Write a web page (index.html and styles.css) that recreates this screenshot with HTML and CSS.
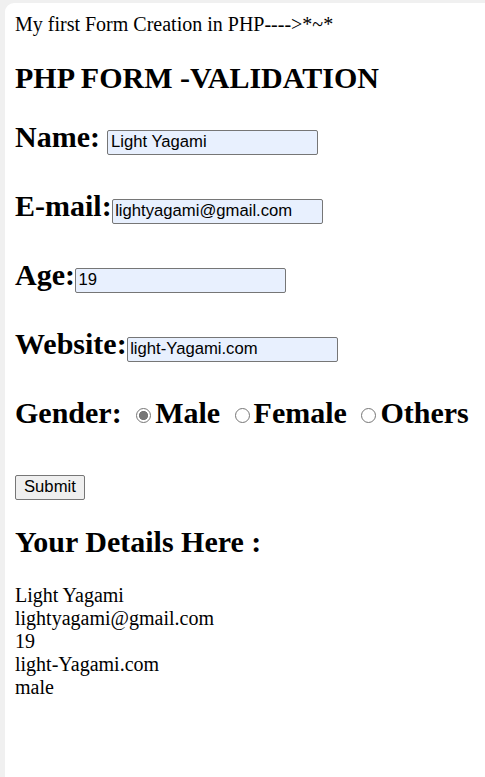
FILE: index.html
```html
<!DOCTYPE html>
<html lang="en">
<head>
<meta charset="utf-8">
<title>PHP Form</title>
<link rel="stylesheet" href="styles.css">
</head>
<body>
<div class="page">
My first Form Creation in PHP----&gt;*~*
<h2 class="heading">PHP FORM -VALIDATION</h2>
<form class="form" method="post">
Name: <input class="field" type="text" name="name" value="Light Yagami"><br><br>
E-mail:<input class="field" type="text" name="email" value="lightyagami@gmail.com"><br><br>
Age:<input class="field" type="text" name="age" value="19"><br><br>
Website:<input class="field" type="text" name="website" value="light-Yagami.com"><br><br>
Gender: <input class="radio" type="radio" name="gender" value="male" checked>Male <input class="radio" type="radio" name="gender" value="female">Female <input class="radio" type="radio" name="gender" value="others">Others<br><br>
<button class="submit" type="button">Submit</button>
</form>
<h2 class="heading">Your Details Here :</h2>
<div class="details">
Light Yagami<br>
lightyagami@gmail.com<br>
19<br>
light-Yagami.com<br>
male
</div>
</div>
</body>
</html>
```
FILE: styles.css
```css
html {
  margin: 0;
  padding: 0;
  height: 100%;
  background: #f0f0f0;
}

body {
  margin: 0;
  padding: 3px 0 0 5px;
  height: 100%;
  box-sizing: border-box;
  font-family: "Liberation Serif", "Times New Roman", serif;
  color: #000;
}

.page {
  background: #fff;
  border-top-left-radius: 9px;
  padding: 10px;
  height: 100%;
  box-sizing: border-box;
  font-size: 20px;
  line-height: 23px;
  overflow: hidden;
}

.heading {
  font-size: 30px;
  line-height: 34.5px;
  font-weight: bold;
  margin: 24.9px 0;
}

.form {
  font-size: 30px;
  line-height: 34.5px;
  font-weight: bold;
  margin: 24.9px 0;
}

.field {
  box-sizing: border-box;
  width: 211px;
  height: 25px;
  margin: 0;
  padding: 0 2.5px;
  border: 1px solid #767676;
  border-radius: 2px;
  background: #e8f0fe;
  font-family: "Liberation Sans", Arial, sans-serif;
  font-size: 16.67px;
  font-weight: normal;
  color: #000;
  vertical-align: baseline;
}

.radio {
  appearance: none;
  -webkit-appearance: none;
  box-sizing: border-box;
  width: 15px;
  height: 15px;
  margin: 0 4px 0 7px;
  border: 1px solid #767676;
  border-radius: 50%;
  background: #fff;
  vertical-align: baseline;
}

.radio:checked {
  background: radial-gradient(circle, #767676 0 4.3px, #fff 4.8px);
}

.submit {
  box-sizing: border-box;
  height: 25px;
  margin: 0;
  padding: 0 8px;
  border: 1px solid #767676;
  border-radius: 2px;
  background: #efefef;
  font-family: "Liberation Sans", Arial, sans-serif;
  font-size: 16.67px;
  font-weight: normal;
  color: #000;
  vertical-align: baseline;
}

.details {
  font-size: 20px;
  line-height: 23px;
}
```
